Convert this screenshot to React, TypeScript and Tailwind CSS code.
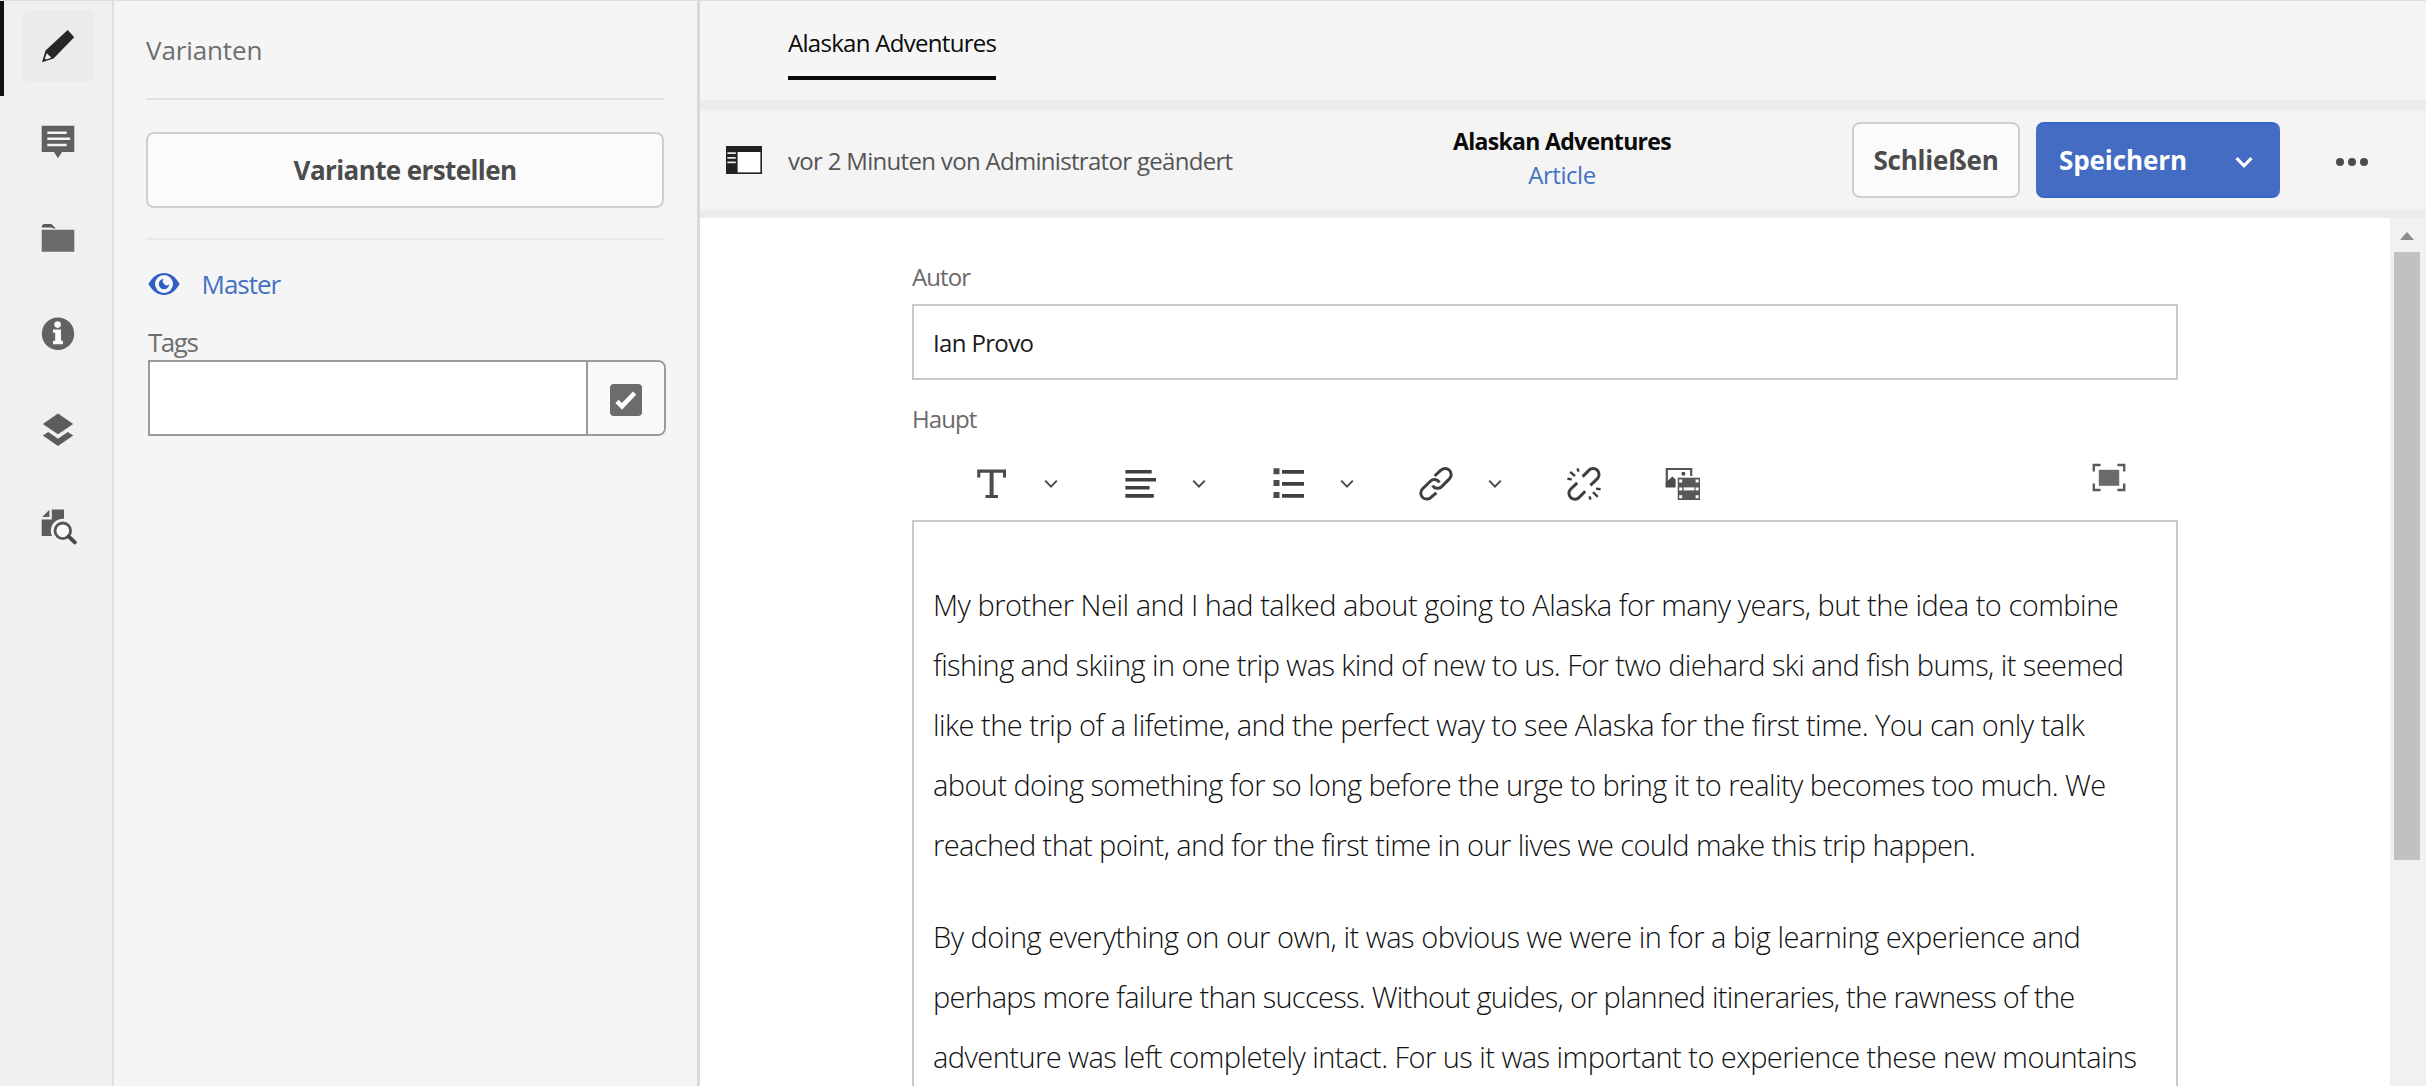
import type { ReactNode } from "react";

const PencilIcon = () => (
  <svg viewBox="0 0 36 36" className="h-9 w-9">
    <path d="M27.7 2 34.2 9.3 13.6 30.6 2 34.2 5.6 22.4Z" fill="#262626" />
    <path d="M6.8 25.2 11.4 29.8 6 31.6 4.8 30.4Z" fill="#f0f0f0" />
  </svg>
);

const CommentIcon = () => (
  <svg viewBox="0 0 36 36" className="h-9 w-9">
    <path d="M1.7 1.7H34.3V28H22L18 34.3 14 28H1.7Z" fill="#5f5f5f" />
    <path d="M7.3 8.7H26.7M7.3 14.8H30.2M7.3 21H26.7" stroke="#f4f4f4" strokeWidth="2.6" />
  </svg>
);

const FolderIcon = () => (
  <svg viewBox="0 0 36 36" className="h-9 w-9">
    <path d="M1.7 7.4V6L3.6 4H11.4L15.8 8.6H13.6L11.4 7.4Z" fill="#5a5a5a" />
    <path d="M1.7 9.8H34.3V31.8H1.7Z" fill="#6b6b6b" />
  </svg>
);

const InfoIcon = () => (
  <svg viewBox="0 0 36 36" className="h-9 w-9">
    <circle cx="18" cy="17.7" r="16.2" fill="#626262" />
    <circle cx="17.6" cy="8.6" r="3.3" fill="#fafafa" />
    <path d="M13 13.4H21V24.8H23V28.2H13V24.8H15.2V16.8H13Z" fill="#fafafa" />
  </svg>
);

const LayersIcon = () => (
  <svg viewBox="0 0 36 36" className="h-9 w-9" fill="#5c5c5c">
    <path d="M18 1.6 33.2 12 18 22.3 2.8 12Z" />
    <path d="M8.2 20 18 26.8 27.8 20 33.2 23.6 18 34 2.8 23.6Z" />
  </svg>
);

const DocSearchIcon = () => (
  <svg viewBox="0 0 36 36" className="h-9 w-9 overflow-visible">
    <path d="M11.8 1.4H24V28H1.7V11.4H11.8Z" fill="#5c5c5c" />
    <path d="M9.4 1.8V8.9H2.2Z" fill="#5c5c5c" />
    <circle cx="22.8" cy="22.8" r="12" fill="#f2f2f2" />
    <circle cx="22.8" cy="22.8" r="7.8" fill="#fafafa" stroke="#565656" strokeWidth="2.8" />
    <path d="M28.6 28.4 34.8 34.4" stroke="#4b4b4b" strokeWidth="4" strokeLinecap="round" />
  </svg>
);

const EyeIcon = () => (
  <svg viewBox="0 0 32 24" className="h-6 w-8">
    <path d="M0.4 12C4.5 4.6 10 1 16 1S27.5 4.6 31.6 12C27.5 19.4 22 23 16 23S4.5 19.4 0.4 12Z" fill="#2f5fc4" />
    <circle cx="16" cy="12" r="9" fill="#f8f8f8" />
    <path d="M16 6.800A5.200 5.200 0 1 0 21.200 12 3 3 0 0 1 16 11.800 3 3 0 0 1 16 6.800Z" fill="#2f5fc4" />
  </svg>
);

const CheckedBox = () => (
  <svg viewBox="0 0 32 32" className="mt-1 h-8 w-8">
    <rect width="32" height="32" rx="4" fill="#6c6c6c" />
    <path d="M7 17.4 12 22.4 24.6 9" fill="none" stroke="#fff" strokeWidth="4.6" />
  </svg>
);

const SidePanelIcon = () => (
  <svg viewBox="0 0 36 28" className="h-7 w-9">
    <rect width="36" height="28" fill="#222" />
    <rect x="11.6" y="6" width="22.8" height="20.4" fill="#fff" />
    <path d="M1.4 7.2H9.8M1.4 11.8H9.8M1.4 16.4H9.8" stroke="#e8e8e8" strokeWidth="1.8" />
  </svg>
);

const Chevron = ({ className }: { className: string }) => (
  <svg viewBox="0 0 14 10" className={className} fill="none" stroke="currentColor">
    <path d="M1.2 1.6 7 7.6 12.8 1.6" />
  </svg>
);

const TextIcon = () => (
  <svg viewBox="0 0 36 36" className="h-9 w-9 text-[#4b4b4b]" fill="currentColor">
    <path d="M3.2 3.4H32V11.4H29V6.8H19.6V29H24V32H11.5V29H15.6V6.8H6.300V11.400H3.200Z" />
  </svg>
);

const AlignIcon = () => (
  <svg viewBox="0 0 36 36" className="h-9 w-9" stroke="#3f3f3f" strokeWidth="3.6">
    <path d="M3.4 5.7H29.7M3.4 13.8H34M3.4 21.8H27.6M3.4 29.9H31.8" />
  </svg>
);

const ListIcon = () => (
  <svg viewBox="0 0 36 36" className="h-9 w-9">
    <path d="M12 5.9H34M12 17.9H34M12 29.9H34" stroke="#3f3f3f" strokeWidth="3.6" />
    <path d="M3.5 2.2h6v6h-6zM3.5 14h6v6h-6zM3.5 26h6v6h-6z" fill="#4b4b4b" />
  </svg>
);

const LinkIcon = () => (
  <svg viewBox="0 0 36 36" className="h-9 w-9" fill="none" stroke="#3f3f3f" strokeWidth="3">
    <path d="M16.6 10 22.6 4.4A5.7 5.7 0 0 1 31.6 12.6L23.4 20.8A5.7 5.7 0 0 1 14.6 19.4" />
    <path d="M18.4 26.8 13.2 31.2A5.7 5.7 0 0 1 4.4 23L12.6 15A5.7 5.7 0 0 1 21.4 16.4" />
  </svg>
);

const UnlinkIcon = () => (
  <svg viewBox="0 0 36 36" className="h-9 w-9" fill="none" stroke="#3f3f3f" strokeWidth="3">
    <path d="M16.6 10.6 22.8 4.4A5.7 5.7 0 0 1 31.4 12.6L24.4 19.4" />
    <path d="M11.2 16.8 4.6 23.2A5.7 5.7 0 0 0 13.2 31.4L19.2 25.2" />
    <path
      d="M1.4 12.8 5.8 13.4M4.2 5.8 9 10.2M11.4 2.4 12.6 5.6M34.6 23.2 30 22.6M31.8 30.8 27 26.2M24.6 33.6 23.4 30.4"
      strokeWidth="2.4"
    />
  </svg>
);

const AssetIcon = () => (
  <svg viewBox="0 0 36 36" className="h-9 w-9">
    <path d="M2.8 20.2V3H27.2V10" fill="none" stroke="#555" strokeWidth="2.2" />
    <path d="M1.7 21.4V16.6L8.4 10.4 11.6 13.6V21.4Z" fill="#4b4b4b" />
    <circle cx="19.4" cy="7.8" r="2" fill="#4b4b4b" />
    <rect x="13.7" y="11.7" width="22.3" height="22.3" fill="#585858" />
    <path
      d="M15.2 13.6h3v3h-3zM31.6 13.6h3v3h-3zM15.2 21.4h3v3h-3zM31.6 21.4h3v3h-3zM15.2 29.2h3v3h-3zM31.6 29.2h3v3h-3z"
      fill="#fff"
    />
    <path d="M19.6 21.4H30.4V24.4H19.6Z" fill="#fff" />
  </svg>
);

const FullscreenIcon = () => (
  <svg viewBox="0 0 34 29" className="h-[29px] w-[34px]">
    <path
      d="M8.6 2H1.8V8.4M25.4 2H32.2V8.4M8.6 27H1.8V20.6M25.4 27H32.2V20.6"
      fill="none"
      stroke="#5a5a5a"
      strokeWidth="2.4"
    />
    <rect x="6.8" y="6.8" width="20.4" height="16" fill="#6b6b6b" />
  </svg>
);

const railItems = [CommentIcon, FolderIcon, InfoIcon, LayersIcon, DocSearchIcon];

const Rail = () => (
  <nav className="relative flex w-[114px] shrink-0 flex-col gap-6 border-r-2 border-[#dfdfdf] bg-[#f0f0f0] pt-[9px] pl-[22px]">
    <div className="absolute -top-px left-0 h-24 w-1 bg-[#111]" />
    <button className="flex h-[72px] w-[72px] items-center justify-center rounded-lg bg-[#ebebeb]">
      <PencilIcon />
    </button>
    {railItems.map((Icon, i) => (
      <button key={i} className="flex h-[72px] w-[72px] items-center justify-center">
        <Icon />
      </button>
    ))}
  </nav>
);

const VariantsPanel = () => (
  <aside className="flex w-[586px] shrink-0 flex-col border-r-[3px] border-[#d8d8d8] bg-[#f5f5f5] pl-8 text-[26px] leading-9">
    <h2 className="mt-[31px] tracking-[-0.12px] text-[#6e6e6e]">Varianten</h2>
    <div className="mt-[30px] h-0.5 w-[518px] bg-[#e2e2e2]" />
    <button className="mt-8 h-[76px] w-[518px] rounded-lg border-2 border-[#cfcfcf] bg-[#fbfbfb] pb-px font-bold tracking-[-0.6px] text-[#4b4b4b]">
      Variante erstellen
    </button>
    <div className="mt-[30px] h-0.5 w-[518px] bg-[#eaeaea]" />
    <a className="mt-[26px] flex items-center pl-0.5 text-[#4571c5]">
      <EyeIcon />
      <span className="ml-[21.500px] tracking-[-1px]">Master</span>
    </a>
    <label className="mt-[22px] pl-0.5 tracking-[-1.5px] text-[#6e6e6e]">Tags</label>
    <div className="ml-0.5 flex h-[76px] w-[518px] overflow-hidden rounded-r-lg border-2 border-[#9b9b9b] bg-white">
      <div className="flex-1" />
      <button className="flex w-[78px] items-center justify-center border-l-2 border-[#9b9b9b] bg-[#fafafa]">
        <CheckedBox />
      </button>
    </div>
  </aside>
);

const Toolbar = () => (
  <div className="flex h-[108px] shrink-0 items-center border-b-8 border-[#ececec] bg-[#f4f4f4] pl-[26px]">
    <SidePanelIcon />
    <p className="mt-0.5 ml-[26px] w-[460px] text-2xl leading-8 tracking-[-0.69px] whitespace-nowrap text-[#555]">
      vor 2 Minuten von Administrator geändert
    </p>
    <div className="-mt-1 ml-[205px] flex w-[218px] flex-col items-center leading-[34px] whitespace-nowrap">
      <h1 className="text-[23px] font-bold tracking-[-0.68px] text-[#0a0a0a]">Alaskan Adventures</h1>
      <a className="text-2xl leading-[34px] tracking-[-0.45px] text-[#4571c5]">Article</a>
    </div>
    <div className="mr-[57px] ml-auto flex items-center text-[26px] font-bold">
      <button className="h-[76px] w-[168px] rounded-lg border-2 border-[#cfcfcf] bg-[#fbfbfb] pt-px tracking-[-0.2px] text-[#4b4b4b]">
        Schließen
      </button>
      <button className="ml-4 flex h-[76px] w-[244px] items-center rounded-lg border-y-2 border-[#3463c1] bg-[#446cc3] pt-px pl-[23px] text-white">
        <span className="w-[176px] text-left tracking-[-0.1px]">Speichern</span>
        <Chevron className="mt-1 h-[13px] w-[18px] stroke-[2.4]" />
      </button>
      <svg viewBox="0 0 34 10" className="mt-0.5 ml-[55px] h-2.5 w-[34px]" fill="#4b4b4b">
        <circle cx="5" cy="6" r="4" />
        <circle cx="17" cy="6" r="4" />
        <circle cx="29" cy="6" r="4" />
      </svg>
    </div>
  </div>
);

const MenuTool = ({ children }: { children: ReactNode }) => (
  <button className="flex w-[148px] items-center">
    {children}
    <Chevron className="ml-[33.500px] h-2.5 w-3.5 stroke-2 text-[#4b4b4b]" />
  </button>
);

const paragraphs: { text: string; tracking: string }[][] = [
  [
    { text: "My brother Neil and I had talked about going to Alaska for many years, but the idea to combine", tracking: "tracking-[-0.49px]" },
    { text: "fishing and skiing in one trip was kind of new to us. For two diehard ski and fish bums, it seemed", tracking: "tracking-[-0.57px]" },
    { text: "like the trip of a lifetime, and the perfect way to see Alaska for the first time. You can only talk", tracking: "tracking-[-0.515px]" },
    { text: "about doing something for so long before the urge to bring it to reality becomes too much. We", tracking: "tracking-[-0.59px]" },
    { text: "reached that point, and for the first time in our lives we could make this trip happen.", tracking: "tracking-[-0.585px]" },
  ],
  [
    { text: "By doing everything on our own, it was obvious we were in for a big learning experience and", tracking: "tracking-[-0.485px]" },
    { text: "perhaps more failure than success. Without guides, or planned itineraries, the rawness of the", tracking: "tracking-[-0.725px]" },
    { text: "adventure was left completely intact. For us it was important to experience these new mountains", tracking: "tracking-[-0.545px]" },
  ],
];

const Editor = () => (
  <div className="flex min-h-0 flex-1 bg-white">
    <div className="flex min-w-0 flex-1 flex-col pt-[43px] pl-[212px]">
      <div className="flex min-h-0 w-[1266px] flex-1 flex-col">
        <label className="text-2xl leading-8 tracking-[-0.9px] text-[#6a6a6a]">Autor</label>
        <div className="mt-[11px] flex h-[76px] shrink-0 items-center border-2 border-[#c9c9c9] pt-0.5 pl-[19px] text-2xl tracking-[-0.65px] text-[#1a1a1a]">
          Ian Provo
        </div>
        <label className="mt-[23px] text-2xl leading-8 tracking-[-0.95px] text-[#6a6a6a]">Haupt</label>
        <div className="flex h-[85px] shrink-0 items-center pl-[62px]">
          <div className="mt-[13px] flex items-center">
            <MenuTool><TextIcon /></MenuTool>
            <MenuTool><AlignIcon /></MenuTool>
            <MenuTool><ListIcon /></MenuTool>
            <MenuTool><LinkIcon /></MenuTool>
            <UnlinkIcon />
            <div className="ml-[62px]"><AssetIcon /></div>
          </div>
          <div className="mr-[52px] ml-auto"><FullscreenIcon /></div>
        </div>
        <div className="flex min-h-0 flex-1 flex-col gap-8 overflow-hidden border-x-2 border-t-2 border-[#c9c9c9] pt-[53px] pl-[19px] text-[29px] leading-[60px] font-light whitespace-nowrap text-[#111]">
          {paragraphs.map((lines, i) => (
            <div key={i}>
              {lines.map((line) => (
                <p key={line.text} className={line.tracking}>{line.text}</p>
              ))}
            </div>
          ))}
        </div>
      </div>
    </div>
    <div className="flex w-9 shrink-0 flex-col bg-[#f1f1f1] pt-[14px] pl-1">
      <svg viewBox="0 0 14 8" className="ml-1.5 h-2 w-3.5" fill="#8d8d8d">
        <path d="M7 0 14 8H0Z" />
      </svg>
      <div className="mt-3 h-[608px] w-[26px] bg-[#c1c1c1]" />
    </div>
  </div>
);

export default function App() {
  return (
    <div className="flex h-[1086px] w-[2426px] overflow-hidden border-t border-[#dedede] font-['Open_Sans',sans-serif]">
      <Rail />
      <VariantsPanel />
      <main className="flex min-w-0 flex-1 flex-col">
        <div className="flex h-[109px] shrink-0 items-start border-b-[10px] border-[#ececec] bg-[#f5f5f5] pl-[88px]">
          <div className="mt-[26px] w-[208px] border-b-4 border-[#0a0a0a] pb-[17px] text-2xl leading-8 tracking-[-0.7px] whitespace-nowrap text-[#0a0a0a]">
            Alaskan Adventures
          </div>
        </div>
        <Toolbar />
        <Editor />
      </main>
    </div>
  );
}
